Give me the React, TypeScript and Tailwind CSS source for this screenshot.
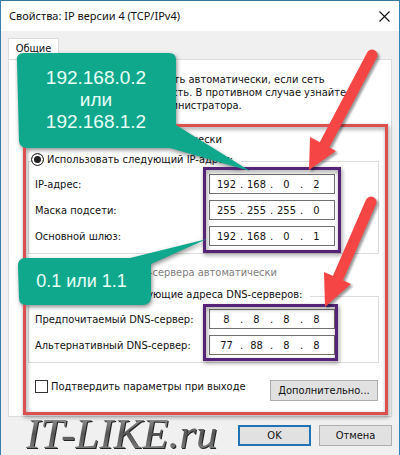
import { ReactNode, useState } from "react";

type Address = [string, string, string, string];

function AddressRow({ id, label, value }: { id: string; label: string; value: Address }) {
  const [octets, setOctets] = useState<string[]>(value);

  return (
    <div className="flex h-[26px] items-center">
      <label htmlFor={`${id}-0`} className="w-[174px] shrink-0 whitespace-nowrap">
        {label}
      </label>
      <div className="flex h-5 w-[126px] items-center border border-[#707070] bg-white px-[3px]">
        {octets.map((octet, i) => (
          <div key={i} className="flex">
            <input
              id={`${id}-${i}`}
              aria-label={`${label} ${i + 1}`}
              className="w-[27px] bg-transparent text-center outline-none"
              value={octet}
              onChange={(e) =>
                setOctets(octets.map((x, n) => (n === i ? e.target.value : x)))
              }
            />
            {i < 3 && <span className="w-[3px]">.</span>}
          </div>
        ))}
      </div>
    </div>
  );
}

function Radio({ name, disabled, checked, children }: {
  name: string;
  disabled?: boolean;
  checked?: boolean;
  children: ReactNode;
}) {
  return (
    <label className={`flex items-center gap-[3px] whitespace-nowrap ${disabled ? "text-[#7d7d7d]" : ""}`}>
      <input
        type="radio"
        name={name}
        defaultChecked={checked}
        disabled={disabled}
        className="size-[13px] shrink-0 appearance-none rounded-full border border-[#333] bg-white checked:bg-[#222] checked:shadow-[inset_0_0_0_2px_white]"
      />
      {children}
    </label>
  );
}

function Group({ name, legend, children }: { name: string; legend: string; children: ReactNode }) {
  return (
    <fieldset className="mr-3 ml-[19px] border border-[#dcdcdc] pl-[6px]">
      <legend className="-ml-1 h-4 pr-2">
        <Radio name={name} checked>
          {legend}
        </Radio>
      </legend>
      <div className="pt-0.5 pb-1">{children}</div>
    </fieldset>
  );
}

function Annotations() {
  return (
    <div className="pointer-events-none absolute inset-0 font-['Liberation_Sans',sans-serif] text-[#e8fff8]">
      <svg className="absolute top-0 left-0 drop-shadow-[1px_2px_2px_rgba(0,0,0,0.45)]" width="398" height="453" viewBox="1 1 398 453" fill="none">
        <path d="M24.5 125.5H386.5V413.5H24.5Z" stroke="#dc4f50" strokeWidth="3" />
        <path d="M204.5 168.5H339.5V251.5H204.5Z" stroke="#552477" strokeWidth="3" />
        <path d="M204.5 305.5H336.5V359.5H204.5Z" stroke="#552477" strokeWidth="3" />
        <path
          d="M24 53H169Q176 53 176 60V125L250 171L170 148H27Q20 148 19 141L17 61Q16 53 24 53Z"
          fill="#10a88c"
        />
        <path
          d="M25 258H130L207 239L151 264V298Q150 305 143 305H26Q19 305 19 298L18 266Q18 258 25 258Z"
          fill="#10a88c"
        />
      </svg>
      <svg className="absolute top-0 left-0 drop-shadow-[2px_2px_1px_rgba(0,0,0,0.4)]" width="398" height="453" viewBox="1 1 398 453">
        <path d="M372 55L325 144" stroke="#f64545" strokeWidth="11" strokeLinecap="round" />
        <path d="M310 137L336 151L309 170Z" fill="#f64545" />
        <path d="M371 202L338 278" stroke="#f64545" strokeWidth="11" strokeLinecap="round" />
        <path d="M324 272L351 284L325 307Z" fill="#f64545" />
      </svg>
      <div className="absolute top-[66px] left-[16px] w-[158px] text-center text-[19px] leading-[22px]">
        192.168.0.2
        <br />
        или
        <br />
        192.168.1.2
      </div>
      <div className="absolute top-[269px] left-[16px] w-[129px] text-center text-[18px] leading-[22px]">
        0.1 или 1.1
      </div>
    </div>
  );
}

export default function App() {
  return (
    <main className="relative border border-t-[#38789c] border-r-[#3086b8] border-b-[#2375ad] border-l-[#397dac] bg-[#f0f0f0] font-['DejaVu_Sans_Condensed','DejaVu_Sans',sans-serif] text-[11px] leading-[13px] text-[#111]">
      <header className="flex h-[30px] items-center justify-between bg-white pr-[7px] pl-2">
        <h1 className="font-['Noto_Sans',sans-serif] leading-4">
          Свойства: IP версии 4 (TCP/IPv4)
        </h1>
        <button aria-label="Закрыть" className="p-0.5">
          <svg width="11" height="11" viewBox="0 0 11 11" stroke="#111" strokeWidth="1.1">
            <path d="M0.5 0.5L10.5 10.5M10.5 0.5L0.5 10.5" />
          </svg>
        </button>
      </header>

      <div className="px-[7px] pt-[7px]">
        <button className="-mb-px block h-[22px] w-[51px] border border-b-0 border-[#dcdcdc] bg-white pb-[3px] text-center">
          Общие
        </button>
        <section className="h-[358px] border border-[#dcdcdc] bg-white">
          <p className="pt-[13px] pl-[10px] whitespace-nowrap">
            Параметры IP можно назначать автоматически, если сеть
            <br />
            поддерживает эту возможность. В противном случае узнайте
            <br />
            параметры IP у сетевого администратора.
          </p>
          <div className="mt-[21px] mb-[7px] pl-[19px]">
            <Radio name="ip">Получить IP-адрес автоматически</Radio>
          </div>
          <Group name="ip" legend="Использовать следующий IP-адрес:">
            <AddressRow id="ip" label="IP-адрес:" value={["192", "168", "0", "2"]} />
            <AddressRow id="mask" label="Маска подсети:" value={["255", "255", "255", "0"]} />
            <AddressRow id="gateway" label="Основной шлюз:" value={["192", "168", "0", "1"]} />
          </Group>
          <div className="mt-3 mb-[9px] pl-[16px]">
            <Radio name="dns" disabled>
              Получить адрес DNS-сервера автоматически
            </Radio>
          </div>
          <Group name="dns" legend="Использовать следующие адреса DNS-серверов:">
            <AddressRow id="dns1" label="Предпочитаемый DNS-сервер:" value={["8", "8", "8", "8"]} />
            <AddressRow id="dns2" label="Альтернативный DNS-сервер:" value={["77", "88", "8", "8"]} />
          </Group>
          <div className="mt-[17px] flex items-start justify-between pr-[13px] pl-[26px]">
            <label className="flex items-center gap-[3px]">
              <input type="checkbox" className="size-[13px] appearance-none border border-[#333] bg-white" />
              Подтвердить параметры при выходе
            </label>
            <button className="h-[21px] w-[108px] border border-[#adadad] bg-[#e1e1e1]">
              Дополнительно...
            </button>
          </div>
        </section>
      </div>

      <footer className="flex h-[38px] items-start justify-between pt-2 pr-[7px] pl-[25px]">
        <span className="-mt-[13px] bg-linear-to-b from-[#aaa] via-[#555] to-[#888] bg-clip-text pr-1 font-['Liberation_Serif',serif] text-[43px] leading-[43px] text-transparent italic drop-shadow-[1px_1px_0_#222]">
          IT-LIKE.ru
        </span>
        <div className="flex gap-2">
          <button className="h-[21px] w-[73px] border-2 border-[#2173b5] bg-[#e1e1e1]">OK</button>
          <button className="h-[21px] w-[73px] border border-[#adadad] bg-[#e1e1e1]">Отмена</button>
        </div>
      </footer>

      <Annotations />
    </main>
  );
}
